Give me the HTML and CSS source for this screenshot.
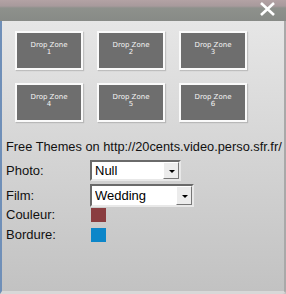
FILE: index.html
```html
<!DOCTYPE html>
<html>
	<head>
		<meta charset="UTF-8">
		<title>Drop Zones</title>
		<link rel="stylesheet" href="styles.css">
	</head>
	<body>
		<div id="window">
			<div class="titlebar">
				<svg class="close" width="17" height="14" viewBox="0 0 17 14">
					<path d="M2 1 L15 13 M15 1 L2 13" stroke="#fff" stroke-width="2.6" fill="none"/>
				</svg>
			</div>
			<div class="panel">
				<div class="zones">
					<div class="zone">Drop Zone<br>1</div>
					<div class="zone">Drop Zone<br>2</div>
					<div class="zone">Drop Zone<br>3</div>
					<div class="zone">Drop Zone<br>4</div>
					<div class="zone">Drop Zone<br>5</div>
					<div class="zone">Drop Zone<br>6</div>
				</div>
				<p class="info">Free Themes on http://20cents.video.perso.sfr.fr/</p>
				<div class="options">
					<div class="row">
						<label for="photo">Photo:</label>
						<span class="combo">
							<select id="photo" class="pick">
								<option>Null</option>
							</select>
						</span>
					</div>
					<div class="row">
						<label for="film" class="tall">Film:</label>
						<span class="combo wide">
							<select id="film" class="pick">
								<option>Wedding</option>
							</select>
						</span>
					</div>
					<div class="row short">
						<label class="small">Couleur:</label>
						<span class="swatch couleur"></span>
					</div>
					<div class="row short">
						<label class="small">Bordure:</label>
						<span class="swatch bordure"></span>
					</div>
				</div>
			</div>
		</div>
	</body>
</html>
```
FILE: styles.css
```css
* {
	margin: 0;
	padding: 0;
	box-sizing: border-box;
}
body {
	width: 286px;
	height: 294px;
	overflow: hidden;
	font-family: "Liberation Sans", Arial, sans-serif;
	background: #c4c4c4;
}
#window {
	display: flex;
	flex-direction: column;
	height: 294px;
}
.titlebar {
	height: 21px;
	display: flex;
	justify-content: flex-end;
	align-items: flex-start;
	padding: 2px 10px 0 0;
	background: linear-gradient(to bottom, #b3a2a4 0, #a89a9c 6px, #8e918c 8px, #878a86 100%);
}
.panel {
	flex: 1;
	border-left: 2px solid #6f8fb8;
	border-right: 2px solid #a9a9a9;
	border-bottom: 3px solid #d8d8d8;
	border-bottom-right-radius: 4px;
	background: linear-gradient(to bottom, #e6e6e6 0, #d6d6d6 45%, #c2c2c2 100%);
	padding: 10px 0 0 4px;
	overflow: hidden;
}
.zones {
	display: grid;
	grid-template-columns: repeat(3, 68px);
	column-gap: 14px;
	row-gap: 13px;
	margin-left: 9px;
}
.zone {
	height: 39px;
	background: #6e6e6e;
	border: 2px solid #fafafa;
	box-shadow: 1px 1px 1px rgba(0, 0, 0, 0.15);
	color: #f4f4f4;
	font-family: "DejaVu Sans", Tahoma, sans-serif;
	font-size: 7px;
	line-height: 7px;
	text-align: center;
	padding-top: 9px;
}
.info {
	margin-top: 17px;
	font-size: 12.8px;
	line-height: 15px;
	white-space: nowrap;
	color: #111;
}
.options {
	margin-top: 6px;
	font-size: 13px;
	color: #111;
}
.row {
	display: flex;
	align-items: flex-start;
	height: 24px;
}
.row.short {
	height: 20px;
}
.row label {
	width: 84px;
	line-height: 21px;
}
.row label.tall {
	line-height: 23px;
}
.row label.small {
	line-height: 14px;
}
.combo {
	position: relative;
	display: block;
	width: 91px;
	height: 21px;
}
.combo.wide {
	width: 104px;
	height: 23px;
}
.combo::after {
	content: "";
	position: absolute;
	right: 2px;
	top: 2px;
	bottom: 2px;
	width: 14px;
	background: #ececec;
	border: 1px solid;
	border-color: #fff #777 #777 #fff;
	pointer-events: none;
}
.combo::before {
	content: "";
	position: absolute;
	right: 6px;
	top: 50%;
	margin-top: -1px;
	border-left: 3px solid transparent;
	border-right: 3px solid transparent;
	border-top: 3px solid #000;
	z-index: 1;
	pointer-events: none;
}
.pick {
	appearance: none;
	-webkit-appearance: none;
	display: block;
	width: 100%;
	height: 100%;
	font-family: "Liberation Sans", Arial, sans-serif;
	font-size: 13px;
	color: #000;
	border: 2px solid;
	border-color: #6a6a6a #e8e8e8 #e8e8e8 #6a6a6a;
	border-radius: 0;
	background: #fff;
	padding-left: 3px;
}
.swatch {
	display: block;
	width: 15px;
	height: 14px;
	margin-left: 1px;
}
.couleur {
	background: #8a3d40;
}
.bordure {
	background: #0c86c9;
}
```
